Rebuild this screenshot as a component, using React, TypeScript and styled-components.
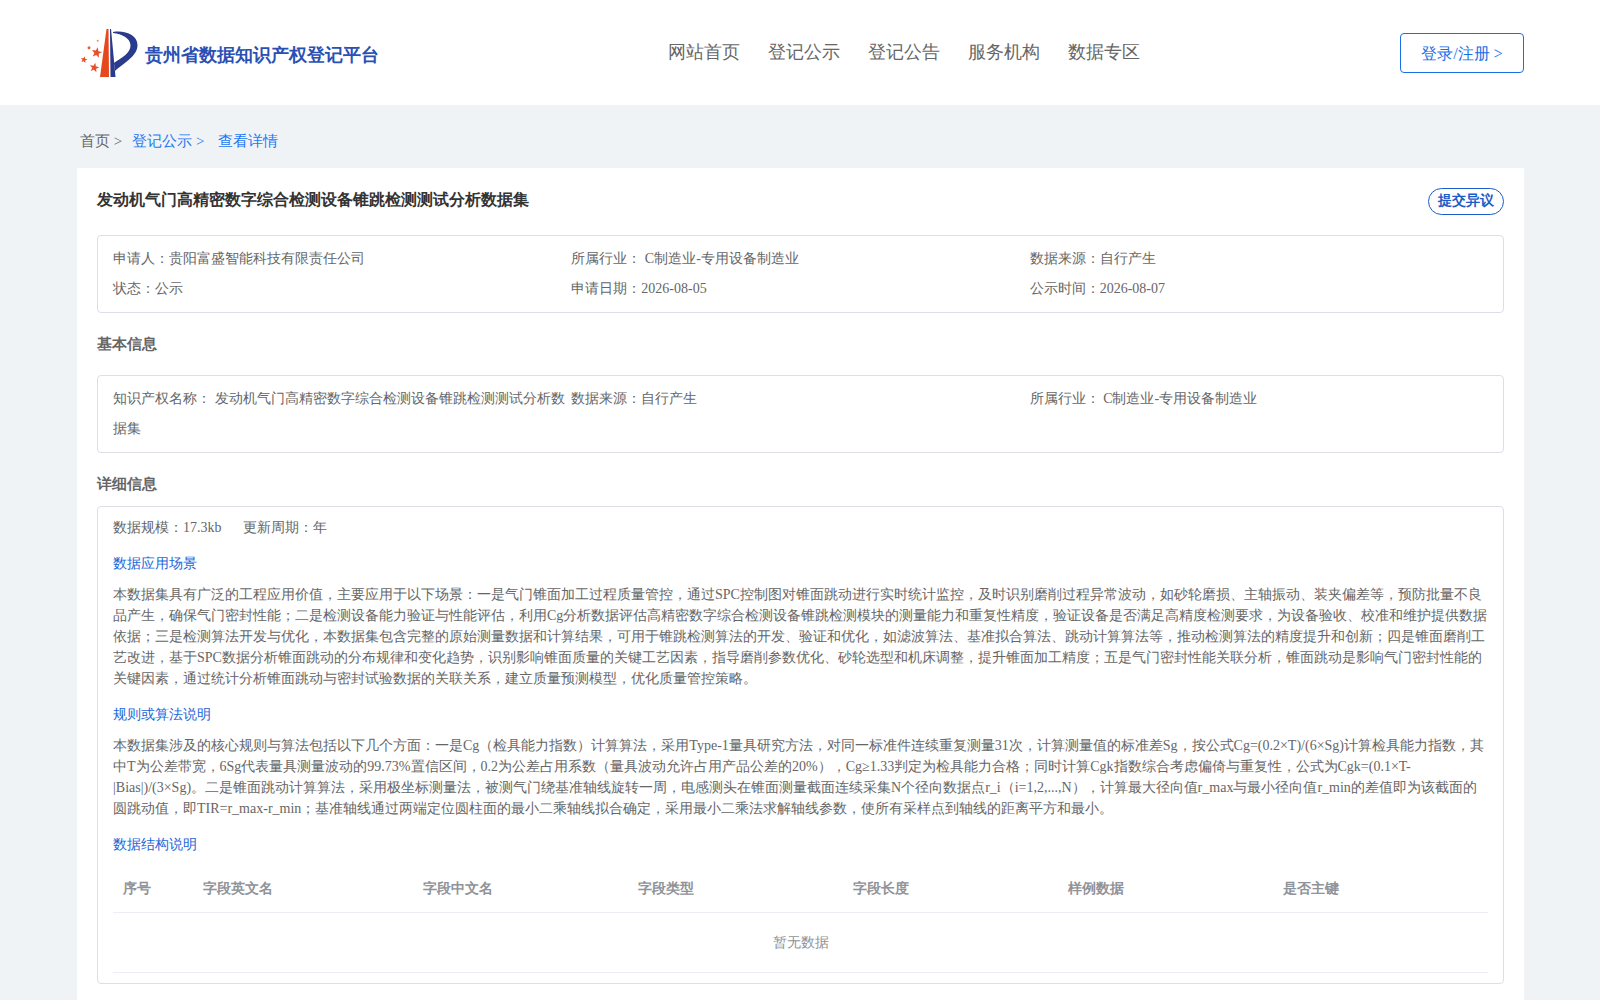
import React from "react";
import styled, { createGlobalStyle } from "styled-components";

const Global = createGlobalStyle`
  html, body { margin: 0; padding: 0; background: #eff3f6; }
  body { font-family: "Liberation Serif", serif; font-size: 14px; color: #666; }
  * { box-sizing: border-box; }
`;

const Header = styled.header`
  height: 105px;
  background: #fff;
  display: flex;
  align-items: flex-start;
  padding: 0 76px 0 77px;
`;
const Brand = styled.div`
  width: 591px;
  height: 105px;
  display: flex;
  align-items: center;
`;
const LogoMark = styled.svg`
  width: 68px;
  height: 60px;
  flex: none;
  margin-top: 5px;
`;
const BrandName = styled.span`
  font-size: 18px;
  font-weight: 700;
  color: #2a50b4;
  line-height: 24px;
  margin-top: 5px;
`;
const Nav = styled.nav`
  display: flex;
  gap: 28px;
  height: 105px;
  align-items: center;
  padding-bottom: 2px;
`;
const NavItem = styled.a`
  font-size: 18px;
  color: #666;
  line-height: 24px;
`;
const LoginButton = styled.button`
  margin: 33px 0 0 auto;
  width: 124px;
  height: 40px;
  background: #fff;
  border: 1px solid #1a6fe8;
  border-radius: 4px;
  color: #1a6fe8;
  font: 16px "Liberation Serif", serif;
  padding: 2px 0 0;
`;
const Breadcrumb = styled.div`
  height: 63px;
  padding: 26px 0 0 80px;
  font-size: 15px;
  line-height: 20px;
  display: flex;
`;
const Crumb = styled.span<{ $active?: boolean; $gap: number }>`
  color: ${(p) => (p.$active ? "#1e78f0" : "#666")};
  margin-right: ${(p) => p.$gap}px;
`;
const Card = styled.main`
  margin: 0 76px 0 77px;
  background: #fff;
  padding: 20px 20px 20px;
`;
const TitleRow = styled.div`
  display: flex;
  justify-content: space-between;
  align-items: flex-start;
  height: 47px;
`;
const Title = styled.h1`
  margin: 0;
  font-size: 16px;
  font-weight: 700;
  line-height: 24px;
  color: #333;
`;
const ObjectionButton = styled.button`
  width: 76px;
  height: 27px;
  border: 1px solid #1c5cc8;
  border-radius: 13.5px;
  background: #fff;
  color: #1c5cc8;
  font: 700 14px "Liberation Serif", serif;
  padding: 0 0 1px;
`;
const InfoBox = styled.section`
  border: 1px solid #dcdfe6;
  border-radius: 4px;
  padding: 8px 15px 8px;
  display: grid;
  grid-template-columns: repeat(3, 1fr);
`;
const InfoCell = styled.div`
  line-height: 30px;
`;
const SectionHeading = styled.h2<{ $top: number; $bottom: number }>`
  margin: ${(p) => p.$top}px 0 ${(p) => p.$bottom}px;
  font-size: 15px;
  font-weight: 700;
  line-height: 20px;
  color: #666;
`;
const DetailBox = styled.section`
  border: 1px solid #dcdfe6;
  border-radius: 4px;
  padding: 10px 15px 10px;
`;
const Meta = styled.div`
  display: flex;
  gap: 21px;
  line-height: 21px;
`;
const SubHeading = styled.h3`
  margin: 15px 0 10px;
  font-size: 14px;
  font-weight: 400;
  line-height: 21px;
  color: #1c66d8;
`;
const Paragraph = styled.p`
  margin: 0;
  line-height: 21px;
  color: #666;
`;
const FieldTable = styled.table`
  width: 100%;
  border-collapse: collapse;
  table-layout: fixed;
  margin-top: 10px;
`;
const HeadCell = styled.th<{ $w?: number }>`
  ${(p) => (p.$w ? `width: ${p.$w}px;` : "")}
  padding: 2px 10px 0;
  height: 47px;
  text-align: left;
  font-size: 14px;
  font-weight: 700;
  color: #909399;
  border-bottom: 1px solid #ebeef5;
`;
const EmptyCell = styled.td`
  height: 60px;
  padding: 2px 0 0;
  text-align: center;
  color: #909399;
  border-bottom: 1px solid #ebeef5;
`;

const para1 =
  "本数据集具有广泛的工程应用价值，主要应用于以下场景：一是气门锥面加工过程质量管控，通过SPC控制图对锥面跳动进行实时统计监控，及时识别磨削过程异常波动，如砂轮磨损、主轴振动、装夹偏差等，预防批量不良品产生，确保气门密封性能；二是检测设备能力验证与性能评估，利用Cg分析数据评估高精密数字综合检测设备锥跳检测模块的测量能力和重复性精度，验证设备是否满足高精度检测要求，为设备验收、校准和维护提供数据依据；三是检测算法开发与优化，本数据集包含完整的原始测量数据和计算结果，可用于锥跳检测算法的开发、验证和优化，如滤波算法、基准拟合算法、跳动计算算法等，推动检测算法的精度提升和创新；四是锥面磨削工艺改进，基于SPC数据分析锥面跳动的分布规律和变化趋势，识别影响锥面质量的关键工艺因素，指导磨削参数优化、砂轮选型和机床调整，提升锥面加工精度；五是气门密封性能关联分析，锥面跳动是影响气门密封性能的关键因素，通过统计分析锥面跳动与密封试验数据的关联关系，建立质量预测模型，优化质量管控策略。";
const para2 =
  "本数据集涉及的核心规则与算法包括以下几个方面：一是Cg（检具能力指数）计算算法，采用Type-1量具研究方法，对同一标准件连续重复测量31次，计算测量值的标准差Sg，按公式Cg=(0.2×T)/(6×Sg)计算检具能力指数，其中T为公差带宽，6Sg代表量具测量波动的99.73%置信区间，0.2为公差占用系数（量具波动允许占用产品公差的20%），Cg≥1.33判定为检具能力合格；同时计算Cgk指数综合考虑偏倚与重复性，公式为Cgk=(0.1×T-|Bias|)/(3×Sg)。二是锥面跳动计算算法，采用极坐标测量法，被测气门绕基准轴线旋转一周，电感测头在锥面测量截面连续采集N个径向数据点r_i（i=1,2,...,N），计算最大径向值r_max与最小径向值r_min的差值即为该截面的圆跳动值，即TIR=r_max-r_min；基准轴线通过两端定位圆柱面的最小二乘轴线拟合确定，采用最小二乘法求解轴线参数，使所有采样点到轴线的距离平方和最小。";

const navItems = ["网站首页", "登记公示", "登记公告", "服务机构", "数据专区"];
const columns = ["字段中文名", "字段类型", "字段长度", "样例数据", "是否主键"];

const Star = ({ x, y, r }: { x: number; y: number; r: number }) => {
  const pts = Array.from({ length: 10 }, (_, i) => {
    const a = -Math.PI / 2 + 0.2 + (i * Math.PI) / 5;
    const d = i % 2 === 0 ? r : r * 0.42;
    return `${x + d * Math.cos(a)},${y + d * Math.sin(a)}`;
  }).join(" ");
  return <polygon points={pts} fill="#e8502a" />;
};

export default function App() {
  return (
    <>
      <Global />
      <Header>
        <Brand>
          <LogoMark viewBox="2 0 68 60">
            <path d="M31.5 4 L33.5 4 L34 52 L25 52 Z" fill="#e5481c" />
            <path d="M35 4 L36 4 L40.5 52 L35.5 52 Z" fill="#2a3a8c" />
            <path d="M38 7 C50 5 62.5 10 62.5 20 C62.5 31 50 37 40 46 L39 38 C46 33 56 28 55.5 20 C55 13 47 9 38 8 Z" fill="#2a3a8c" />
            <Star x={21.7} y={27.7} r={5.5} />
            <Star x={9} y={34.7} r={3.5} />
            <Star x={19.3} y={42.7} r={5} />
            <circle cx={14} cy={22.7} r={1.5} fill="#e8603a" />
            <circle cx={22.7} cy={15.7} r={1} fill="#ee8a6a" />
          </LogoMark>
          <BrandName>贵州省数据知识产权登记平台</BrandName>
        </Brand>
        <Nav>
          {navItems.map((n) => (
            <NavItem key={n}>{n}</NavItem>
          ))}
        </Nav>
        <LoginButton>登录/注册 &gt;</LoginButton>
      </Header>
      <Breadcrumb>
        <Crumb $gap={10}>首页 &gt;</Crumb>
        <Crumb $active $gap={14}>登记公示 &gt;</Crumb>
        <Crumb $active $gap={0}>查看详情</Crumb>
      </Breadcrumb>
      <Card>
        <TitleRow>
          <Title>发动机气门高精密数字综合检测设备锥跳检测测试分析数据集</Title>
          <ObjectionButton>提交异议</ObjectionButton>
        </TitleRow>
        <InfoBox>
          <InfoCell>申请人：贵阳富盛智能科技有限责任公司</InfoCell>
          <InfoCell>所属行业： C制造业-专用设备制造业</InfoCell>
          <InfoCell>数据来源：自行产生</InfoCell>
          <InfoCell>状态：公示</InfoCell>
          <InfoCell>申请日期：2026-08-05</InfoCell>
          <InfoCell>公示时间：2026-08-07</InfoCell>
        </InfoBox>
        <SectionHeading $top={21} $bottom={21}>基本信息</SectionHeading>
        <InfoBox>
          <InfoCell>知识产权名称： 发动机气门高精密数字综合检测设备锥跳检测测试分析数据集</InfoCell>
          <InfoCell>数据来源：自行产生</InfoCell>
          <InfoCell>所属行业： C制造业-专用设备制造业</InfoCell>
        </InfoBox>
        <SectionHeading $top={21} $bottom={12}>详细信息</SectionHeading>
        <DetailBox>
          <Meta>
            <span>数据规模：17.3kb</span>
            <span>更新周期：年</span>
          </Meta>
          <SubHeading>数据应用场景</SubHeading>
          <Paragraph>{para1}</Paragraph>
          <SubHeading>规则或算法说明</SubHeading>
          <Paragraph>{para2}</Paragraph>
          <SubHeading>数据结构说明</SubHeading>
          <FieldTable>
            <thead>
              <tr>
                <HeadCell $w={80}>序号</HeadCell>
                <HeadCell $w={220}>字段英文名</HeadCell>
                {columns.map((c) => (
                  <HeadCell key={c}>{c}</HeadCell>
                ))}
              </tr>
            </thead>
            <tbody>
              <tr>
                <EmptyCell colSpan={7}>暂无数据</EmptyCell>
              </tr>
            </tbody>
          </FieldTable>
        </DetailBox>
      </Card>
    </>
  );
}
